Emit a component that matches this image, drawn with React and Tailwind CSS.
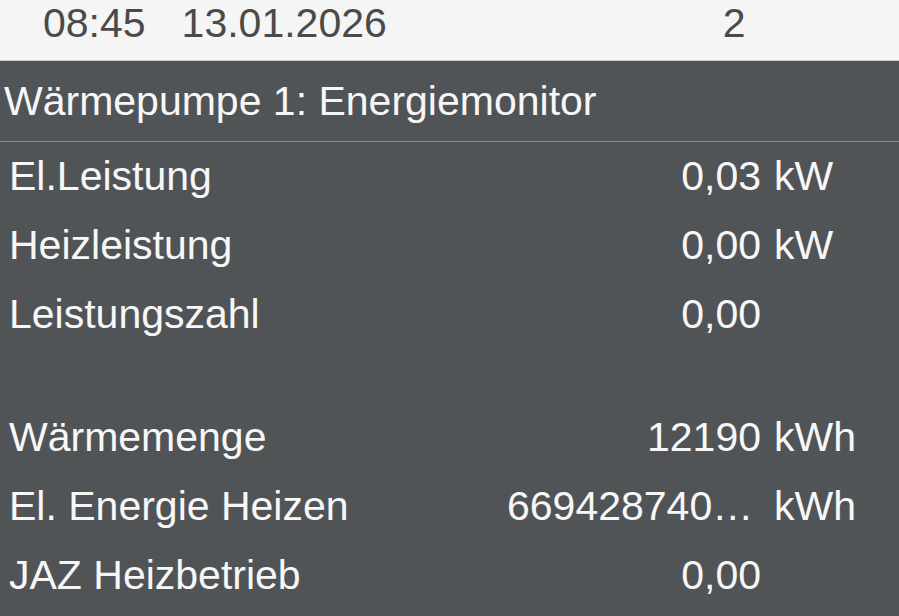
export default function App() {
  const rows1 = [
    { label: "El.Leistung", value: "0,03", unit: "kW" },
    { label: "Heizleistung", value: "0,00", unit: "kW" },
    { label: "Leistungszahl", value: "0,00", unit: "" },
  ];
  const rows2 = [
    { label: "Wärmemenge", value: "12190", unit: "kWh" },
    { label: "El. Energie Heizen", value: "6694287401234", unit: "kWh" },
    { label: "JAZ Heizbetrieb", value: "0,00", unit: "" },
  ];
  const Row = ({ r }) => (
    <div className="flex h-[69px] items-center leading-[69px]">
      <div className="flex-1 truncate pl-[9px]">{r.label}</div>
      <div className="w-[254px] truncate text-right">{r.value}</div>
      <div className="w-[138px] pl-[13px]">{r.unit}</div>
    </div>
  );
  return (
    <div
      className="h-[616px] w-[899px] overflow-hidden bg-[#515457] text-[41px]"
      style={{ fontFamily: '"Liberation Sans", Arial, sans-serif' }}
    >
      <div className="flex h-[61px] items-start border-b border-[#c9c9c9] bg-[#f5f5f5] leading-[46px] text-[#4a4a4a]">
        <span className="ml-[43px]">08:45</span>
        <span className="ml-[36px]">13.01.2026</span>
        <span className="ml-[336px]">2</span>
      </div>
      <div className="flex h-[81px] items-center border-b border-[#86898c] pl-[4px] leading-[80px] text-[#f7f7f7]">
        Wärmepumpe 1: Energiemonitor
      </div>
      <div className="text-[#f7f7f7]">
        {rows1.map((r) => (
          <Row key={r.label} r={r} />
        ))}
        <div className="h-[54px]" />
        {rows2.map((r) => (
          <Row key={r.label} r={r} />
        ))}
      </div>
    </div>
  );
}
